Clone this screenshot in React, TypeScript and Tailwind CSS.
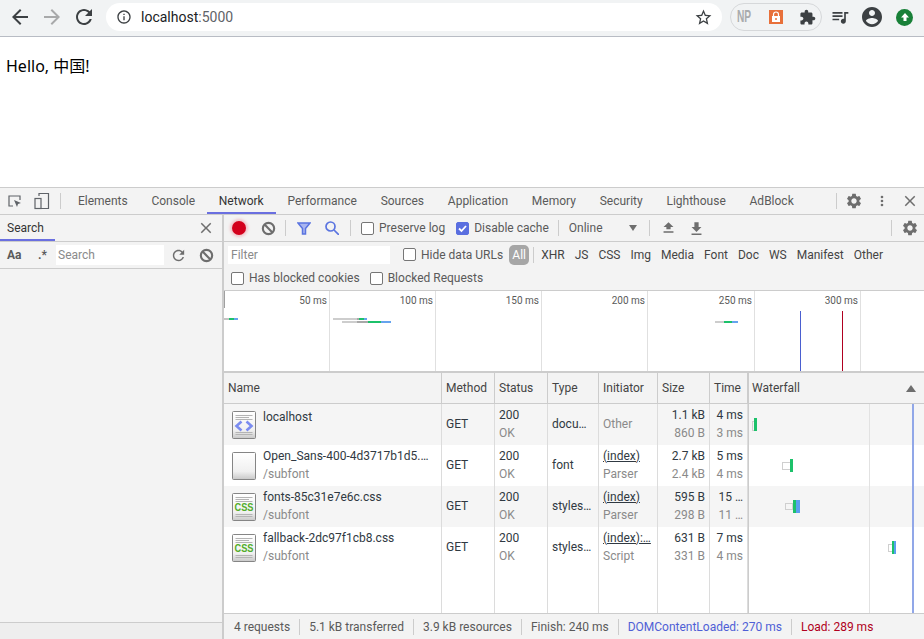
import type { ReactNode } from 'react';

const P = {
  back: 'M20 11H7.83l5.59-5.59L12 4l-8 8 8 8 1.41-1.41L7.83 13H20v-2z',
  forward: 'M12 4l-1.41 1.41L16.17 11H4v2h12.17l-5.58 5.59L12 20l8-8z',
  reload:
    'M17.65 6.35C16.2 4.9 14.21 4 12 4c-4.42 0-7.99 3.58-7.99 8s3.57 8 7.99 8c3.73 0 6.84-2.55 7.73-6h-2.08c-.82 2.33-3.04 4-5.65 4-3.31 0-6-2.69-6-6s2.69-6 6-6c1.66 0 3.14.69 4.22 1.78L13 11h7V4l-2.35 2.35z',
  info: 'M11 7h2v2h-2zm0 4h2v6h-2zm1-9C6.48 2 2 6.48 2 12s4.48 10 10 10 10-4.48 10-10S17.52 2 12 2zm0 18c-4.41 0-8-3.59-8-8s3.59-8 8-8 8 3.59 8 8-3.59 8-8 8z',
  star: 'M22 9.24l-7.19-.62L12 2 9.19 8.63 2 9.24l5.46 4.73L5.82 21 12 17.27 18.18 21l-1.63-7.03L22 9.24zM12 15.4l-3.76 2.27 1-4.28-3.32-2.88 4.38-.38L12 6.1l1.71 4.04 4.38.38-3.32 2.88 1 4.28L12 15.4z',
  puzzle:
    'M20.5 11H19V7c0-1.1-.9-2-2-2h-4V3.5C13 2.12 11.88 1 10.5 1S8 2.12 8 3.5V5H4c-1.1 0-1.99.9-1.99 2v3.8H3.5c1.49 0 2.7 1.21 2.7 2.7s-1.21 2.7-2.7 2.7H2V20c0 1.1.9 2 2 2h3.8v-1.5c0-1.49 1.21-2.7 2.7-2.7 1.49 0 2.7 1.21 2.7 2.7V22H17c1.1 0 2-.9 2-2v-4h1.5c1.38 0 2.5-1.12 2.5-2.5S21.88 11 20.5 11z',
  queue:
    'M15 6H3v2h12V6zm0 4H3v2h12v-2zM3 16h8v-2H3v2zM17 6v8.18c-.31-.11-.65-.18-1-.18-1.66 0-3 1.34-3 3s1.34 3 3 3 3-1.34 3-3V8h3V6h-5z',
  account:
    'M12 2C6.48 2 2 6.48 2 12s4.48 10 10 10 10-4.48 10-10S17.52 2 12 2zm0 3c1.66 0 3 1.34 3 3s-1.34 3-3 3-3-1.34-3-3 1.34-3 3-3zm0 14.2c-2.5 0-4.71-1.28-6-3.22.03-1.99 4-3.08 6-3.08 1.99 0 5.97 1.09 6 3.08-1.29 1.94-3.5 3.22-6 3.22z',
  gear: 'M19.14 12.94c.04-.3.06-.61.06-.94 0-.32-.02-.64-.07-.94l2.03-1.58c.18-.14.23-.41.12-.61l-1.92-3.32c-.12-.22-.37-.29-.59-.22l-2.39.96c-.5-.38-1.03-.7-1.62-.94l-.36-2.54c-.04-.24-.24-.41-.48-.41h-3.84c-.24 0-.43.17-.47.41l-.36 2.54c-.59.24-1.13.57-1.62.94l-2.39-.96c-.22-.08-.47 0-.59.22L2.74 8.87c-.12.21-.08.47.12.61l2.03 1.58c-.05.3-.09.63-.09.94s.02.64.07.94l-2.03 1.58c-.18.14-.23.41-.12.61l1.92 3.32c.12.22.37.29.59.22l2.39-.96c.5.38 1.03.7 1.62.94l.36 2.54c.05.24.24.41.48.41h3.84c.24 0 .44-.17.47-.41l.36-2.54c.59-.24 1.13-.56 1.62-.94l2.39.96c.22.08.47 0 .59-.22l1.92-3.32c.12-.22.07-.47-.12-.61l-2.01-1.58zM12 15.6c-1.98 0-3.6-1.62-3.6-3.6s1.62-3.6 3.6-3.6 3.6 1.62 3.6 3.6-1.62 3.6-3.6 3.6z',
  close: 'M19 6.41L17.59 5 12 10.59 6.41 5 5 6.41 10.59 12 5 17.59 6.41 19 12 13.41 17.59 19 19 17.59 13.41 12z',
  dots: 'M12 8a2 2 0 1 0 0-4 2 2 0 0 0 0 4zm0 6a2 2 0 1 0 0-4 2 2 0 0 0 0 4zm0 6a2 2 0 1 0 0-4 2 2 0 0 0 0 4z',
  upload: 'M9 13v-3H5l7-7 7 7h-4v3H9zm-4 3h14v2H5v-2z',
  download: 'M15 3v7h4l-7 7-7-7h4V3h6zM5 19h14v2H5v-2z',
};

function Icon({ d, size = 24, className = '' }: { d: string; size?: number; className?: string }) {
  return (
    <svg width={size} height={size} viewBox="0 0 24 24" className={`shrink-0 fill-current ${className}`}>
      <path d={d} />
    </svg>
  );
}

function BlockIcon({ className = '' }: { className?: string }) {
  return (
    <svg width="17" height="17" viewBox="0 0 24 24" fill="none" stroke="currentColor" strokeWidth="3" className={`shrink-0 text-[#6e6e6e] ${className}`}>
      <circle cx="12" cy="12" r="8" />
      <path d="M6.500 6.500l11 11" />
    </svg>
  );
}

function Divider({ className = '' }: { className?: string }) {
  return <div className={`h-4 w-px shrink-0 bg-[#cccccc] ${className}`} />;
}

function Check({ checked = false, className = '' }: { checked?: boolean; className?: string }) {
  return (
    <span
      className={`flex h-[13px] w-[13px] shrink-0 items-center justify-center rounded-[2px] border ${
        checked ? 'border-[#5a6fe0] bg-[#5a6fe0]' : 'border-[#767676] bg-white'
      } ${className}`}
    >
      {checked && (
        <svg width="11" height="11" viewBox="0 0 11 11" fill="none" stroke="white" strokeWidth="1.8">
          <path d="M2 5.500 4.500 8 9 3" />
        </svg>
      )}
    </span>
  );
}

function DocIcon({ kind }: { kind: 'html' | 'blank' | 'css' }) {
  return (
    <svg width="24" height="28" viewBox="0 0 24 28" className="mr-[7px] shrink-0">
      <defs>
        <linearGradient id={`doc-${kind}`} x1="0" y1="0" x2="0" y2="1">
          <stop offset="0" stopColor="#ffffff" />
          <stop offset="0.7" stopColor="#f0f0f0" />
          <stop offset="1" stopColor="#c8c8c8" />
        </linearGradient>
      </defs>
      <rect x="0.5" y="0.500" width="23" height="27" rx="1" fill={`url(#doc-${kind})`} stroke="#858585" />
      {kind !== 'blank' && (
        <path d="M3.500 4.500H20.500M3.500 6.500H17M3.500 8.500H20.500M3.500 21.500H20.500M3.500 23.500H20.500" stroke="#b4b4b4" strokeWidth="1" />
      )}
      {kind === 'html' && (
        <path d="M9.500 10.500 4.500 15l5 4.500M14.500 10.500l5 4.500-5 4.500" fill="none" stroke="#7b8cf0" strokeWidth="2.600" />
      )}
      {kind === 'css' && (
        <text x="12" y="18" textAnchor="middle" textLength="19" lengthAdjust="spacingAndGlyphs" fontSize="10.500" fontWeight="700" fill="#52ad2b" fontFamily="Liberation Sans, sans-serif">
          CSS
        </text>
      )}
    </svg>
  );
}

const colWidths = ['w-[218px]', 'w-[53px]', 'w-[53px]', 'w-[51px]', 'w-[59px]', 'w-[52px]', 'w-[38px]'];

function Cell({ i, children, right = false }: { i: number; children?: ReactNode; right?: boolean }) {
  return (
    <div
      className={`flex h-full shrink-0 flex-col justify-center overflow-hidden whitespace-nowrap border-r border-[#dcdcdc] px-1 pb-[2px] leading-[18px] ${
        colWidths[i]
      } ${right ? 'items-end' : ''}`}
    >
      {children}
    </div>
  );
}

const Sub = ({ children }: { children: ReactNode }) => <span className="text-[#8a8a8a]">{children}</span>;

const requests = [
  { icon: 'html', name: 'localhost', path: '', type: 'docu…', init: 'Other', link: false, initSub: '', size: '1.1 kB', sizeSub: '860 B', time: '4 ms', timeSub: '3 ms' },
  { icon: 'blank', name: 'Open_Sans-400-4d3717b1d5.…', path: '/subfont', type: 'font', init: '(index)', link: true, initSub: 'Parser', size: '2.7 kB', sizeSub: '2.4 kB', time: '5 ms', timeSub: '4 ms' },
  { icon: 'css', name: 'fonts-85c31e7e6c.css', path: '/subfont', type: 'styles…', init: '(index)', link: true, initSub: 'Parser', size: '595 B', sizeSub: '298 B', time: '15 …', timeSub: '11 …' },
  { icon: 'css', name: 'fallback-2dc97f1cb8.css', path: '/subfont', type: 'styles…', init: '(index):…', link: true, initSub: 'Script', size: '631 B', sizeSub: '331 B', time: '7 ms', timeSub: '4 ms' },
] as const;

const tabs = ['Elements', 'Console', 'Network', 'Performance', 'Sources', 'Application', 'Memory', 'Security', 'Lighthouse', 'AdBlock'];
const filters = ['XHR', 'JS', 'CSS', 'Img', 'Media', 'Font', 'Doc', 'WS', 'Manifest', 'Other'];
const ticks = ['50 ms', '100 ms', '150 ms', '200 ms', '250 ms', '300 ms'];

function BrowserBar() {
  return (
    <div className="flex h-[37px] items-center border-b border-[#b8bcc4] bg-[#f1f3f4] pb-[2px] text-[#3c4043]">
      <div className="flex w-[106px] shrink-0 items-center gap-2 pl-2">
        <Icon d={P.back} />
        <Icon d={P.forward} className="text-[#a8a9aa]" />
        <Icon d={P.reload} />
      </div>
      <div className="flex h-[28px] w-[616px] shrink-0 items-center rounded-full bg-white pl-[10px] pr-[9px]">
        <Icon d={P.info} size={16} />
        <span className="ml-[9px] pt-[1px] font-['Roboto',sans-serif] text-[14px] text-[#202124]">
          localhost<span className="text-[#5f6368]">:5000</span>
        </span>
        <Icon d={P.star} size={19} className="ml-auto" />
      </div>
      <div className="ml-2 flex h-[28px] w-[92px] shrink-0 items-center rounded-full border border-[#d6d8da] pl-[6px]">
        <span className="origin-left scale-x-[0.6] font-['Liberation_Sans',sans-serif] text-[17px] font-bold text-[#a9abad]">NP</span>
        <span className="ml-[8px] flex h-[14px] w-[14px] items-center justify-center bg-[#e8703a]">
          <svg width="10" height="12" viewBox="0 0 10 12" fill="none">
            <path d="M2.500 5V3.500a2.500 2.500 0 0 1 5 0V5" stroke="white" strokeWidth="1.200" />
            <rect x="1" y="5" width="8" height="6" fill="white" />
            <circle cx="5" cy="8" r="1" fill="#e8703a" />
          </svg>
        </span>
        <Icon d={P.puzzle} size={17} className="ml-[16px] text-[#3c4043]" />
      </div>
      <Icon d={P.queue} size={20} className="ml-[8px]" />
      <Icon d={P.account} size={24} className="ml-[10px]" />
      <span className="ml-[12px] flex h-[17px] w-[17px] items-center justify-center rounded-full bg-[#188038]">
        <svg width="10" height="10" viewBox="0 0 10 10" className="fill-white">
          <path d="M5 1 9 5.500H6.500V9h-3V5.500H1z" />
        </svg>
      </span>
    </div>
  );
}

function TabBar() {
  return (
    <div className="flex h-[28px] shrink-0 items-center border-y border-[#cccccc] bg-[#f3f3f3] text-[#5a5a5a]">
      <svg width="16" height="16" viewBox="0 0 16 16" fill="none" className="ml-[7px] shrink-0 text-[#5f6368]">
        <path d="M6 13H2V3h11v4" stroke="currentColor" strokeWidth="1.200" />
        <path d="M7 7l7 3-3 1-1 3z" fill="currentColor" />
      </svg>
      <svg width="16" height="18" viewBox="0 0 16 18" fill="none" className="ml-[11px] shrink-0 text-[#5f6368]">
        <path d="M5 4V1.500h9.500v15H6" stroke="currentColor" strokeWidth="1.200" />
        <rect x="1" y="6.500" width="6" height="10" stroke="currentColor" strokeWidth="1.200" />
      </svg>
      <Divider className="ml-[10px] mr-[5px]" />
      {tabs.map((t) => (
        <div
          key={t}
          className={`flex h-full items-center px-[11.900px] ${
            t === 'Network' ? 'border-b-2 border-[#6a6fe0] pt-[2px] text-[#333333]' : ''
          }`}
        >
          {t}
        </div>
      ))}
      <Divider className="ml-[30px]" />
      <Icon d={P.gear} size={18} className="ml-[8px] text-[#6e6e6e]" />
      <Icon d={P.dots} size={16} className="ml-[11px] text-[#6e6e6e]" />
      <Icon d={P.close} size={18} className="ml-[11px] text-[#6e6e6e]" />
    </div>
  );
}

function SearchPanel() {
  return (
    <div className="flex w-[222px] shrink-0 flex-col bg-[#f3f3f3]">
      <div className="flex h-[27px] shrink-0 items-center justify-between border-b border-[#cccccc] pr-[7px]">
        <div className="flex h-full w-[55px] items-center border-b-2 border-[#6a6fe0] pl-[7px] pt-[2px] text-[#333333]">Search</div>
        <Icon d={P.close} size={18} className="text-[#6e6e6e]" />
      </div>
      <div className="flex h-[27px] shrink-0 items-center border-b border-[#cccccc] text-[#5a5a5a]">
        <span className="ml-[7px] w-[31px] font-bold">Aa</span>
        <span className="w-[18px] font-bold">.*</span>
        <div className="flex h-[20px] w-[108px] items-center bg-white pl-[2px] text-[#8a8a8a]">Search</div>
        <Icon d={P.reload} size={17} className="ml-[6px] text-[#6e6e6e]" />
        <BlockIcon className="ml-[11px]" />
      </div>
      <div className="flex-1" />
      <div className="h-[17px] shrink-0 border-t border-[#cccccc] bg-[#eeeeee]" />
    </div>
  );
}

function NetworkToolbar() {
  return (
    <div className="flex h-[27px] shrink-0 items-center border-b border-[#cccccc] bg-[#f3f3f3] text-[#5a5a5a]">
      <span className="ml-[8px] h-[14px] w-[14px] rounded-full bg-[#d3001c] shadow-[0_0_3px_2px_#f0c0c6]" />
      <BlockIcon className="ml-[14px]" />
      <Divider className="ml-[8px]" />
      <svg width="14" height="13" viewBox="0 0 14 13" className="ml-[11px] shrink-0 fill-[#aab6f0] stroke-[#5a74e0] stroke-[1.5]">
        <path d="M1 1h12L8.500 6.500V12h-3V6.500z" />
      </svg>
      <svg width="14" height="14" viewBox="0 0 14 14" className="ml-[14px] shrink-0 fill-none stroke-[#5a74e0] stroke-[1.7]">
        <circle cx="5.500" cy="5.500" r="4.500" />
        <path d="M9 9l5 5" />
      </svg>
      <Divider className="ml-[11px]" />
      <Check className="ml-[10px]" />
      <span className="ml-[5px]">Preserve log</span>
      <Check checked className="ml-[11px]" />
      <span className="ml-[5px]">Disable cache</span>
      <Divider className="ml-[9px]" />
      <span className="ml-[10px]">Online</span>
      <span className="ml-[26px] h-0 w-0 border-x-[4px] border-t-[6px] border-x-transparent border-t-[#6e6e6e]" />
      <Divider className="ml-[12px]" />
      <Icon d={P.upload} size={17} className="ml-[10px] text-[#6e6e6e]" />
      <Icon d={P.download} size={17} className="ml-[11px] text-[#6e6e6e]" />
      <Divider className="ml-auto" />
      <Icon d={P.gear} size={18} className="ml-[9px] mr-[5px] text-[#6e6e6e]" />
    </div>
  );
}

function FilterBar() {
  return (
    <div className="h-[49px] shrink-0 border-b border-[#cccccc] bg-[#f3f3f3] text-[#5a5a5a]">
      <div className="flex h-[25px] items-center">
        <div className="ml-[4px] flex h-[18px] w-[162px] items-center bg-white pl-[3px] text-[#8a8a8a]">Filter</div>
        <Check className="ml-[13px]" />
        <span className="ml-[5px]">Hide data URLs</span>
        <span className="ml-[6px] flex h-[20px] w-[20px] items-center justify-center rounded-[5px] bg-[#a6a6a6] text-white">All</span>
        <Divider className="ml-[4px] mr-[2px]" />
        {filters.map((f) => (
          <span key={f} className="px-[5px] text-[#444444]">
            {f}
          </span>
        ))}
      </div>
      <div className="flex h-[22px] items-center">
        <Check className="ml-[7px]" />
        <span className="ml-[5px]">Has blocked cookies</span>
        <Check className="ml-[10px]" />
        <span className="ml-[5px]">Blocked Requests</span>
      </div>
    </div>
  );
}

function Overview() {
  return (
    <div className="relative flex h-[82px] shrink-0 border-b-2 border-[#cccccc] bg-white text-[10px] text-[#5a5a5a]">
      {ticks.map((t, i) => (
        <div key={t} className={`shrink-0 border-r border-[#e0e0e0] pr-[2px] pt-[2px] text-right ${i === 4 ? 'w-[107px]' : 'w-[106px]'}`}>
          {t}
        </div>
      ))}
      {/* overview bars, coordinates relative to the chart's origin at x=224, y=291 */}
      <svg className="absolute left-0 top-0" width="700" height="80">
        <rect x="-1" y="0" width="2" height="17" fill="#a0a0a0" />
        <g>
          <rect x="0" y="27" width="5" height="2" fill="#c4c4c4" />
          <rect x="5" y="27" width="5" height="2" fill="#1cc16a" />
          <rect x="10" y="27" width="4" height="2" fill="#66a3ee" />
          <rect x="109" y="27" width="24" height="2" fill="#cdcdcd" />
          <rect x="133" y="27" width="2" height="2" fill="#a8a8a8" />
          <rect x="135" y="27" width="5" height="2" fill="#1cc16a" />
          <rect x="140" y="27" width="3" height="2" fill="#66a3ee" />
          <rect x="118" y="30" width="15" height="2" fill="#cdcdcd" />
          <rect x="133" y="30" width="11" height="2" fill="#a8a8a8" />
          <rect x="144" y="30" width="13" height="2" fill="#1cc16a" />
          <rect x="157" y="30" width="10" height="2" fill="#66a3ee" />
          <rect x="491" y="30" width="9" height="2" fill="#cdcdcd" />
          <rect x="500" y="30" width="8" height="2" fill="#1cc16a" />
          <rect x="508" y="30" width="6" height="2" fill="#66a3ee" />
        </g>
        <rect x="576" y="20" width="1" height="61" fill="#4a5fd0" />
        <rect x="618" y="20" width="1" height="61" fill="#b00020" />
      </svg>
    </div>
  );
}

function Waterfall() {
  // bar rects relative to the waterfall column origin at x=748, y=404
  return (
    <svg className="absolute left-[524px] top-0" width="176" height="209">
      <rect x="121" y="0" width="1" height="209" fill="#e2e2e2" />
      <rect x="164" y="0" width="2" height="209" fill="#91a7e8" />
      <g fill="none" stroke="#cfcfcf">
        <rect x="4.500" y="17.500" width="2" height="9" />
        <rect x="34.500" y="58.500" width="8" height="7" />
        <rect x="37.500" y="99.500" width="7" height="6" />
        <rect x="140.500" y="140.500" width="4" height="7" />
      </g>
      <rect x="6" y="14" width="3" height="13" fill="#1cc16a" />
      <rect x="42" y="55" width="3" height="13" fill="#1cc16a" />
      <rect x="45" y="96" width="3" height="13" fill="#1cc16a" />
      <rect x="48" y="96" width="4" height="13" fill="#5a9fee" />
      <rect x="144" y="137" width="2" height="13" fill="#1cc16a" />
      <rect x="146" y="137" width="2" height="13" fill="#5a9fee" />
    </svg>
  );
}

function RequestTable() {
  return (
    <div className="flex min-h-0 flex-1 flex-col bg-white text-[#303942]">
      <div className="flex h-[31px] shrink-0 items-center border-b border-[#cccccc] bg-[#f3f3f3] text-[#444444]">
        {['Name', 'Method', 'Status', 'Type', 'Initiator', 'Size', 'Time'].map((h, i) => (
          <div key={h} className={`flex h-full shrink-0 items-center border-r border-[#cccccc] pl-1 ${colWidths[i]}`}>
            {h}
          </div>
        ))}
        <div className="flex h-full flex-1 items-center justify-between border-l border-[#cccccc] pl-[3px] pr-2">
          Waterfall
          <span className="h-0 w-0 border-x-[5px] border-b-[7px] border-x-transparent border-b-[#6e6e6e]" />
        </div>
      </div>
      <div className="relative flex min-h-0 flex-1 flex-col">
        {requests.map((r, idx) => (
          <div key={r.name} className={`flex h-[41px] shrink-0 ${idx % 2 === 0 ? 'bg-[#f5f5f5]' : 'bg-white'}`}>
            <div className={`flex h-full shrink-0 items-center overflow-hidden whitespace-nowrap border-r border-[#dcdcdc] pl-2 leading-[18px] ${colWidths[0]}`}>
              <DocIcon kind={r.icon} />
              <div className={`flex flex-col ${r.path ? 'pb-[2px]' : 'self-start pt-[4px]'}`}>
                <span>{r.name}</span>
                {r.path && <Sub>{r.path}</Sub>}
              </div>
            </div>
            <Cell i={1}>GET</Cell>
            <Cell i={2}>
              <span>200</span>
              <Sub>OK</Sub>
            </Cell>
            <Cell i={3}>{r.type}</Cell>
            <Cell i={4}>
              {r.link ? <span className="underline">{r.init}</span> : <Sub>{r.init}</Sub>}
              {r.initSub && <Sub>{r.initSub}</Sub>}
            </Cell>
            <Cell i={5} right>
              <span>{r.size}</span>
              <Sub>{r.sizeSub}</Sub>
            </Cell>
            <Cell i={6} right>
              <span>{r.time}</span>
              <Sub>{r.timeSub}</Sub>
            </Cell>
            <div className="flex-1 border-l border-[#cccccc]" />
          </div>
        ))}
        <div className="flex min-h-0 flex-1">
          {colWidths.map((w, i) => (
            <div key={i} className={`shrink-0 border-r border-[#dcdcdc] ${w}`} />
          ))}
          <div className="flex-1 border-l border-[#cccccc]" />
        </div>
        <Waterfall />
      </div>
    </div>
  );
}

function StatusBar() {
  const items = [
    { t: '4 requests', c: '' },
    { t: '5.1 kB transferred', c: '' },
    { t: '3.9 kB resources', c: '' },
    { t: 'Finish: 240 ms', c: '' },
    { t: 'DOMContentLoaded: 270 ms', c: 'text-[#4f5fd6]' },
    { t: 'Load: 289 ms', c: 'text-[#b00020]' },
  ];
  return (
    <div className="flex h-[26px] shrink-0 items-center border-t border-[#cccccc] bg-[#f3f3f3] pl-[10px] text-[#5a5a5a]">
      {items.map((it, i) => (
        <div key={it.t} className="flex items-center">
          {i > 0 && <Divider className="mx-[9px]" />}
          <span className={it.c}>{it.t}</span>
        </div>
      ))}
    </div>
  );
}

export default function App() {
  return (
    <div className="flex h-[639px] w-[924px] flex-col overflow-hidden bg-white font-['Roboto',sans-serif] text-[12px]">
      <BrowserBar />
      <div className="h-[150px] shrink-0 bg-white px-[6px] pt-[19px] font-['Noto_Sans','Noto_Sans_CJK_SC',sans-serif] text-[16px] leading-[20px] text-black">
        Hello, 中国!
      </div>
      <TabBar />
      <div className="flex min-h-0 flex-1">
        <SearchPanel />
        <div className="flex min-w-0 flex-1 flex-col border-l-2 border-[#cccccc]">
          <NetworkToolbar />
          <FilterBar />
          <Overview />
          <RequestTable />
          <StatusBar />
        </div>
      </div>
    </div>
  );
}
